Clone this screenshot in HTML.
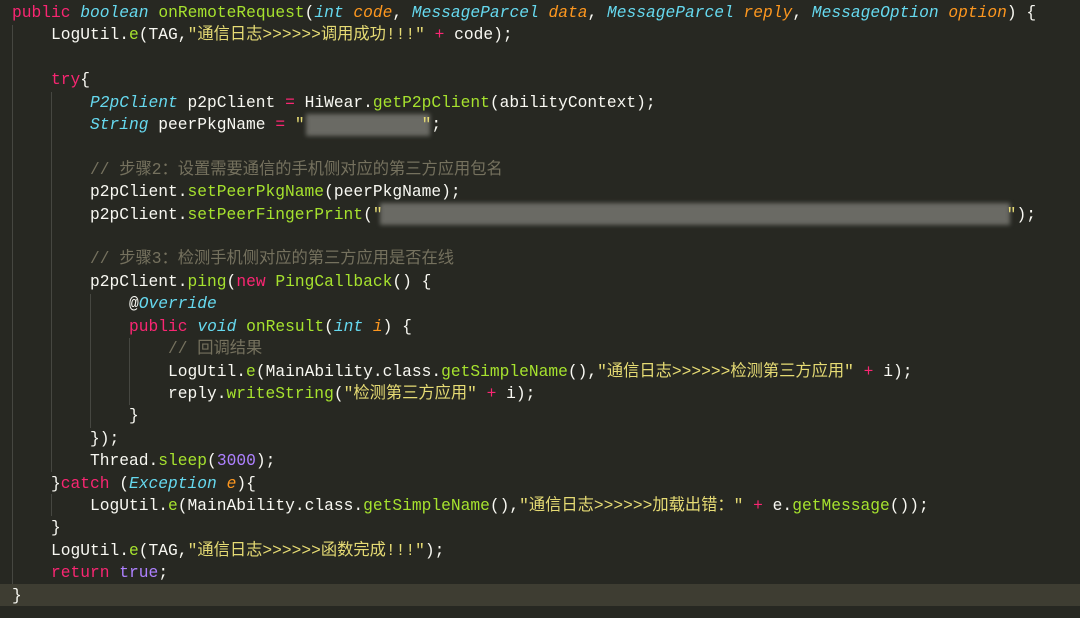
<!DOCTYPE html><html><head><meta charset="utf-8"><style>
body{margin:0;width:1080px;height:618px;background:#272822;overflow:hidden;position:relative}
.c{position:absolute;left:12px;top:2px;font:16.25px/22.4px "Liberation Mono","Noto Sans CJK SC",monospace;color:#f8f8f2;white-space:pre}
.k{color:#f92672}.t{color:#66d9ef;font-style:italic}.f{color:#a6e22e}.p{color:#fd971f;font-style:italic}.s{color:#e6db74}.n{color:#ae81ff}.cm{color:#75715e}
.g{position:absolute;width:1px;background:#464741}
.hl{position:absolute;left:0;top:584px;width:1080px;height:22px;background:#3e3d32}
.b{position:absolute;background:#6a6a64;filter:blur(2px)}
</style></head><body>
<div class="hl"></div>
<div class="g" style="left:12px;top:25px;height:559px"></div>
<div class="g" style="left:51px;top:92px;height:380px"></div>
<div class="g" style="left:51px;top:494px;height:22px"></div>
<div class="g" style="left:90px;top:294px;height:134px"></div>
<div class="g" style="left:129px;top:338px;height:67px"></div>
<div class="b" style="left:306px;top:114px;width:124px;height:22px"></div>
<div class="b" style="left:380px;top:203px;width:630px;height:22px"></div>
<div class="c"><span class="k">public</span> <span class="t">boolean</span> <span class="f">onRemoteRequest</span>(<span class="t">int</span> <span class="p">code</span>, <span class="t">MessageParcel</span> <span class="p">data</span>, <span class="t">MessageParcel</span> <span class="p">reply</span>, <span class="t">MessageOption</span> <span class="p">option</span>) {
    LogUtil.<span class="f">e</span>(TAG,<span class="s">"通信日志&gt;&gt;&gt;&gt;&gt;&gt;调用成功!!!"</span> <span class="k">+</span> code);

    <span class="k">try</span>{
        <span class="t">P2pClient</span> p2pClient <span class="k">=</span> HiWear.<span class="f">getP2pClient</span>(abilityContext);
        <span class="t">String</span> peerPkgName <span class="k">=</span> <span class="s">"            "</span>;

        <span class="cm">// 步骤2：设置需要通信的手机侧对应的第三方应用包名</span>
        p2pClient.<span class="f">setPeerPkgName</span>(peerPkgName);
        p2pClient.<span class="f">setPeerFingerPrint</span>(<span class="s">"                                                                "</span>);

        <span class="cm">// 步骤3：检测手机侧对应的第三方应用是否在线</span>
        p2pClient.<span class="f">ping</span>(<span class="k">new</span> <span class="f">PingCallback</span>() {
            @<span class="t">Override</span>
            <span class="k">public</span> <span class="t">void</span> <span class="f">onResult</span>(<span class="t">int</span> <span class="p">i</span>) {
                <span class="cm">// 回调结果</span>
                LogUtil.<span class="f">e</span>(MainAbility.class.<span class="f">getSimpleName</span>(),<span class="s">"通信日志&gt;&gt;&gt;&gt;&gt;&gt;检测第三方应用"</span> <span class="k">+</span> i);
                reply.<span class="f">writeString</span>(<span class="s">"检测第三方应用"</span> <span class="k">+</span> i);
            }
        });
        Thread.<span class="f">sleep</span>(<span class="n">3000</span>);
    }<span class="k">catch</span> (<span class="t">Exception</span> <span class="p">e</span>){
        LogUtil.<span class="f">e</span>(MainAbility.class.<span class="f">getSimpleName</span>(),<span class="s">"通信日志&gt;&gt;&gt;&gt;&gt;&gt;加载出错："</span> <span class="k">+</span> e.<span class="f">getMessage</span>());
    }
    LogUtil.<span class="f">e</span>(TAG,<span class="s">"通信日志&gt;&gt;&gt;&gt;&gt;&gt;函数完成!!!"</span>);
    <span class="k">return</span> <span class="n">true</span>;
}</div>
</body></html>
